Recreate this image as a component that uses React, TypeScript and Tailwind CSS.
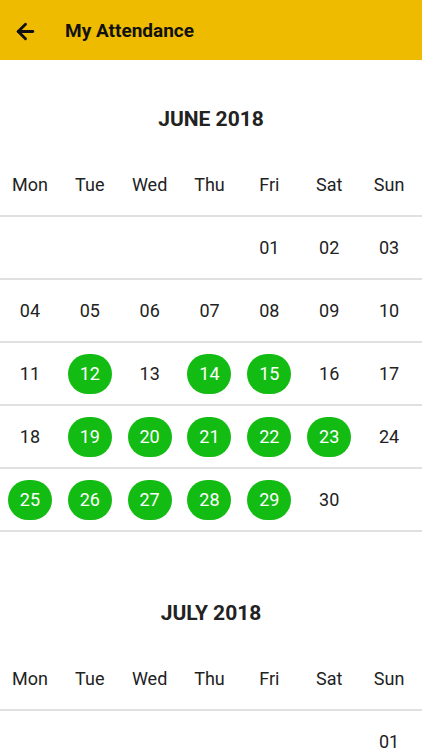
import React from 'react';
import { ArrowLeft } from 'lucide-react';

const WEEKDAYS = ['Mon', 'Tue', 'Wed', 'Thu', 'Fri', 'Sat', 'Sun'];

interface MonthData {
  title: string;
  offset: number; // empty cells before day 1 (Mon-based)
  days: number;
  present: number[];
}

const MONTHS: MonthData[] = [
  { title: 'JUNE 2018', offset: 4, days: 30, present: [12, 14, 15, 19, 20, 21, 22, 23, 25, 26, 27, 28, 29] },
  { title: 'JULY 2018', offset: 6, days: 31, present: [] },
];

const pad = (n: number) => (n < 10 ? `0${n}` : `${n}`);

const MonthCalendar: React.FC<{ month: MonthData }> = ({ month }) => {
  const cells: (number | null)[] = [];
  for (let i = 0; i < month.offset; i++) cells.push(null);
  for (let d = 1; d <= month.days; d++) cells.push(d);
  while (cells.length % 7 !== 0) cells.push(null);

  const weeks: (number | null)[][] = [];
  for (let i = 0; i < cells.length; i += 7) weeks.push(cells.slice(i, i + 7));

  return (
    <div className="pt-[39px] pb-[22px]">
      {/* Month title */}
      <div className="h-[42px] flex items-center justify-center text-[21px] font-bold text-[#222]">
        {month.title}
      </div>

      {/* Weekday header */}
      <div className="mt-3 h-[64px] pr-[3px] grid grid-cols-7 items-center border-b-2 border-[#e0e0e0]">
        {WEEKDAYS.map((w) => (
          <div key={w} className="text-center text-[18px] text-[#222]">{w}</div>
        ))}
      </div>

      {/* Weeks */}
      {weeks.map((week, wi) => (
        <div key={wi} className="h-[63px] pr-[3px] grid grid-cols-7 items-center border-b-2 border-[#e0e0e0]">
          {week.map((d, di) => (
            <div key={di} className="flex items-center justify-center">
              {d !== null && (
                month.present.includes(d) ? (
                  <div className="w-11 h-10 rounded-full bg-[#12bc12] flex items-center justify-center text-[18px] text-white">
                    {pad(d)}
                  </div>
                ) : (
                  <div className="h-10 flex items-center text-[18px] text-[#222]">{pad(d)}</div>
                )
              )}
            </div>
          ))}
        </div>
      ))}
    </div>
  );
};

export default function App() {
  return (
    <div className="w-[422px] h-[750px] flex flex-col bg-white font-['Roboto',sans-serif]">
      {/* Header Bar */}
      <div className="h-[60px] shrink-0 pt-[3px] bg-[#eebb00] flex items-center">
        <ArrowLeft className="ml-[13px] text-[#111]" size={25} strokeWidth={2.75} />
        <div className="ml-[27px] text-[19px] font-bold text-[#111]">My Attendance</div>
      </div>

      <div className="flex-1 overflow-y-auto">
        {MONTHS.map((m) => (
          <MonthCalendar key={m.title} month={m} />
        ))}
      </div>
    </div>
  );
}
